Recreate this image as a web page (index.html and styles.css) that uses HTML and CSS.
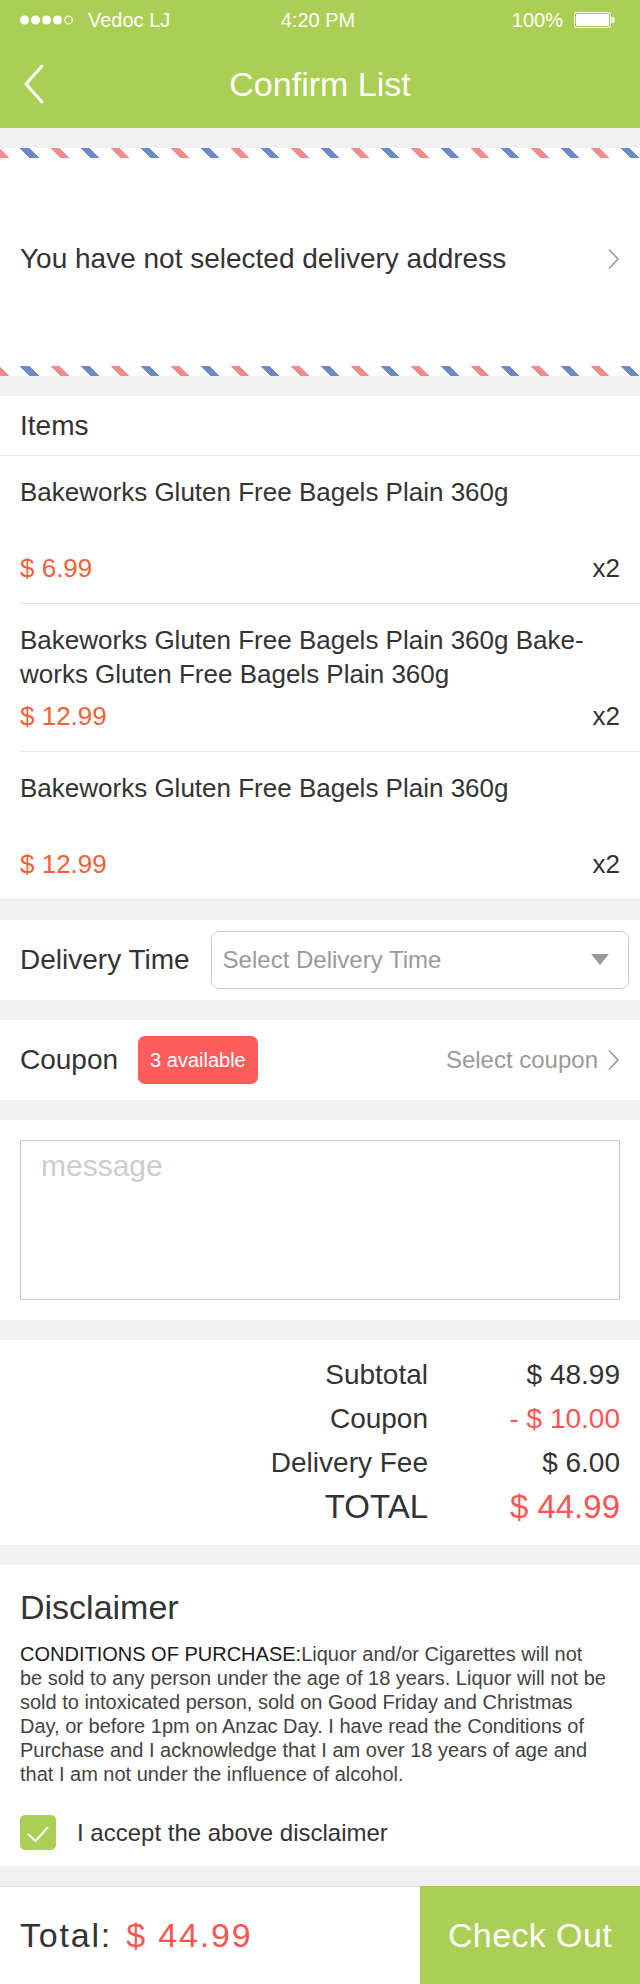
FILE: index.html
```html
<!DOCTYPE html>
<html lang="en">
<head>
<meta charset="utf-8">
<title>Confirm List</title>
<link rel="stylesheet" href="styles.css">
</head>
<body>
<div class="page">
  <header class="topbar">
    <div class="statusbar">
      <div class="sb-left">
        <svg class="signal" width="56" height="10" viewBox="0 0 56 10">
          <circle cx="4.5" cy="5" r="4.5" fill="#fff"/>
          <circle cx="15.5" cy="5" r="4.5" fill="#fff"/>
          <circle cx="26.5" cy="5" r="4.5" fill="#fff"/>
          <circle cx="37.5" cy="5" r="4.5" fill="#fff"/>
          <circle cx="48.5" cy="5" r="3.8" fill="none" stroke="#fff" stroke-width="1.2"/>
        </svg>
        <span>Vedoc LJ</span>
      </div>
      <div class="sb-center">4:20 PM</div>
      <div class="sb-right">
        <span>100%</span>
        <svg class="battery" width="42" height="16" viewBox="0 0 42 16">
          <rect x="0.5" y="0.5" width="36" height="15" rx="2" fill="none" stroke="#fff" stroke-width="1"/>
          <rect x="2" y="2" width="33" height="12" rx="1" fill="#fff"/>
          <rect x="37.5" y="5" width="3" height="6" rx="1" fill="#fff"/>
        </svg>
      </div>
    </div>
    <nav class="navbar">
      <div class="nav-left">
        <svg class="back" width="24" height="40" viewBox="0 0 24 40">
          <path d="M20 2 L4 20 L20 38" fill="none" stroke="#fff" stroke-width="3" stroke-linecap="round" stroke-linejoin="round"/>
        </svg>
      </div>
      <h1 class="nav-title">Confirm List</h1>
      <div class="nav-right"></div>
    </nav>
  </header>

  <section class="address">
    <div class="airmail"></div>
    <div class="address-body">
      <span>You have not selected delivery address</span>
      <svg class="chev" width="13" height="22" viewBox="0 0 13 22">
        <path d="M2 1.5 L11 11 L2 20.5" fill="none" stroke="#9a9a9a" stroke-width="1.6"/>
      </svg>
    </div>
    <div class="airmail"></div>
  </section>

  <section class="items">
    <div class="items-head">Items</div>
    <div class="item">
      <div class="item-name">Bakeworks Gluten Free Bagels Plain 360g</div>
      <div class="item-foot"><span class="price">$ 6.99</span><span class="qty">x2</span></div>
    </div>
    <div class="item">
      <div class="item-name">Bakeworks Gluten Free Bagels Plain 360g Bake&shy;works Gluten Free Bagels Plain 360g</div>
      <div class="item-foot"><span class="price">$ 12.99</span><span class="qty">x2</span></div>
    </div>
    <div class="item">
      <div class="item-name">Bakeworks Gluten Free Bagels Plain 360g</div>
      <div class="item-foot"><span class="price">$ 12.99</span><span class="qty">x2</span></div>
    </div>
  </section>

  <section class="row-section delivery">
    <span class="row-label">Delivery Time</span>
    <div class="select">
      <span>Select Delivery Time</span>
      <svg width="18" height="12" viewBox="0 0 18 12"><path d="M0 0 H18 L9 11 Z" fill="#999"/></svg>
    </div>
  </section>

  <section class="row-section coupon">
    <span class="row-label">Coupon</span>
    <span class="badge">3 available</span>
    <span class="coupon-select">Select coupon
      <svg class="chev" width="13" height="22" viewBox="0 0 13 22">
        <path d="M2 1.5 L11 11 L2 20.5" fill="none" stroke="#9a9a9a" stroke-width="1.6"/>
      </svg>
    </span>
  </section>

  <section class="message">
    <div class="message-box"><span class="placeholder">message</span></div>
  </section>

  <section class="summary">
    <div class="sum-label">Subtotal</div><div class="sum-value">$ 48.99</div>
    <div class="sum-label">Coupon</div><div class="sum-value red">- $ 10.00</div>
    <div class="sum-label">Delivery Fee</div><div class="sum-value">$ 6.00</div>
    <div class="sum-label total">TOTAL</div><div class="sum-value total red">$ 44.99</div>
  </section>

  <section class="disclaimer">
    <h2 class="disc-title">Disclaimer</h2>
    <p class="disc-text"><span class="disc-strong">CONDITIONS OF PURCHASE:</span>Liquor and/or Cigarettes will not be sold to any person under the age of 18 years. Liquor will not be sold to intoxicated person, sold on Good Friday and Christmas Day, or before 1pm on Anzac Day. I have read the Conditions of Purchase and I acknowledge that I am over 18 years of age and that I am not under the influence of alcohol.</p>
    <label class="accept">
      <span class="checkbox">
        <svg width="36" height="35" viewBox="0 0 36 35"><path d="M8 19 L15.5 26 L28 12" fill="none" stroke="#fff" stroke-width="2"/></svg>
      </span>
      <span>I accept the above disclaimer</span>
    </label>
  </section>

  <footer class="bottombar">
    <div class="bb-total">Total: <span class="red bb-amount">$ 44.99</span></div>
    <button class="checkout">Check Out</button>
  </footer>
</div>
</body>
</html>
```

FILE: styles.css
```css
* { box-sizing: border-box; }

html, body {
  margin: 0;
  padding: 0;
}

body {
  background: #f1f1f1;
  font-family: "Liberation Sans", Arial, Helvetica, sans-serif;
  color: #333;
}

.page {
  width: 640px;
  min-height: 1984px;
  display: flex;
  flex-direction: column;
}

/* Top bar */
.topbar {
  background: #abcf55;
  color: #fff;
}

.statusbar {
  height: 40px;
  display: grid;
  grid-template-columns: 1fr auto 1fr;
  align-items: center;
  padding: 0 24px 0 20px;
  font-size: 20px;
}

.sb-left {
  display: flex;
  align-items: center;
  gap: 12px;
}

.sb-center {
  text-align: center;
}

.sb-right {
  display: flex;
  align-items: center;
  justify-content: flex-end;
  gap: 11px;
}

.signal, .battery { display: block; }

.navbar {
  height: 88px;
  display: grid;
  grid-template-columns: 1fr auto 1fr;
  align-items: center;
}

.nav-left {
  padding-left: 22px;
  display: flex;
  align-items: center;
}

.back { display: block; }

.nav-title {
  margin: 0;
  font-size: 34px;
  font-weight: normal;
  color: #fff;
  line-height: 40px;
}

/* Address */
.address {
  margin-top: 20px;
  background: #fff;
}

.airmail {
  height: 10px;
  background: repeating-linear-gradient(45deg,
    #f08c8c 0, #f08c8c 7px,
    #fff 7px, #fff 21.21px,
    #6e89c7 21.21px, #6e89c7 28.21px,
    #fff 28.21px, #fff 42.43px);
}

.address-body {
  height: 208px;
  display: flex;
  align-items: center;
  justify-content: space-between;
  padding: 0 20px 6px;
  font-size: 28px;
  color: #333;
}

.chev { display: block; flex: none; }

/* Items */
.items {
  margin-top: 20px;
  background: #fff;
  border-bottom: 1px solid #e6e6e6;
}

.items-head {
  height: 60px;
  line-height: 59px;
  padding-left: 20px;
  font-size: 28px;
  border-bottom: 1px solid #e6e6e6;
}

.item {
  margin-left: 20px;
  padding: 19px 20px 18px 0;
  border-bottom: 1px solid #e6e6e6;
}

.item:last-child {
  border-bottom: none;
}

.item-name {
  font-size: 26px;
  line-height: 34px;
  min-height: 68px;
  color: #333;
  hyphens: manual;
}

.item-foot {
  margin-top: 8px;
  display: flex;
  justify-content: space-between;
  font-size: 26px;
  line-height: 34px;
}

.price { color: #f2603b; }
.qty { color: #333; }

/* Rows */
.row-section {
  margin-top: 20px;
  background: #fff;
  height: 80px;
  display: flex;
  align-items: center;
  padding: 0 20px;
}

.row-label {
  font-size: 28px;
  color: #333;
}

.delivery {
  padding-right: 11px;
}

.select {
  margin-left: 21px;
  flex: 1;
  height: 58px;
  border: 1px solid #cfcfcf;
  border-radius: 8px;
  display: flex;
  align-items: center;
  justify-content: space-between;
  padding: 0 19px 0 11px;
  font-size: 24px;
  color: #9a9a9a;
}

.select svg { display: block; }

.badge {
  margin-left: 20px;
  background: #ff5c5c;
  color: #fff;
  font-size: 20px;
  height: 48px;
  line-height: 48px;
  padding: 0 12px;
  border-radius: 7px;
}

.coupon-select {
  margin-left: auto;
  display: flex;
  align-items: center;
  gap: 9px;
  font-size: 24px;
  color: #9a9a9a;
}

/* Message */
.message {
  margin-top: 20px;
  background: #fff;
  padding: 20px;
  height: 200px;
}

.message-box {
  height: 160px;
  border: 1px solid #cccccc;
  padding: 7px 20px;
  font-size: 30px;
  line-height: 36px;
}

.placeholder { color: #cdcdcd; }

/* Summary */
.summary {
  margin-top: 20px;
  background: #fff;
  padding: 13px 20px 16px;
  display: grid;
  grid-template-columns: 1fr 192px;
  font-size: 28px;
  line-height: 44px;
  color: #333;
}

.sum-label, .sum-value { text-align: right; }

.total {
  font-size: 33px;
}

.red { color: #fb5555; }

/* Disclaimer */
.disclaimer {
  margin-top: 20px;
  background: #fff;
  padding: 22px 30px 15px 20px;
  height: 301px;
}

.disc-title {
  margin: 0;
  font-size: 34px;
  line-height: 40px;
  font-weight: normal;
  color: #333;
}

.disc-text {
  margin: 15px 0 0;
  font-size: 20px;
  line-height: 24px;
  color: #444;
}

.disc-strong {
  color: #1a1a1a;
}

.accept {
  margin-top: 29px;
  display: flex;
  align-items: center;
  gap: 21px;
  font-size: 24px;
  color: #333;
}

.checkbox {
  width: 36px;
  height: 35px;
  border-radius: 5px;
  background: #abcf55;
  flex: none;
}

.checkbox svg { display: block; }

/* Bottom bar */
.bottombar {
  margin-top: 20px;
  height: 98px;
  background: #fff;
  border-top: 1px solid #dddddd;
  display: flex;
  align-items: stretch;
}

.bb-total {
  flex: 1;
  display: flex;
  align-items: center;
  padding-left: 20px;
  font-size: 34px;
  letter-spacing: 1.8px;
  color: #333;
  white-space: pre;
}

.bb-amount {
  margin-left: 3px;
}

.checkout {
  width: 220px;
  margin-top: -1px;
  border: none;
  background: #abcf55;
  color: #fff;
  font-family: inherit;
  font-size: 34px;
  letter-spacing: 0.4px;
  padding: 0;
}
```
